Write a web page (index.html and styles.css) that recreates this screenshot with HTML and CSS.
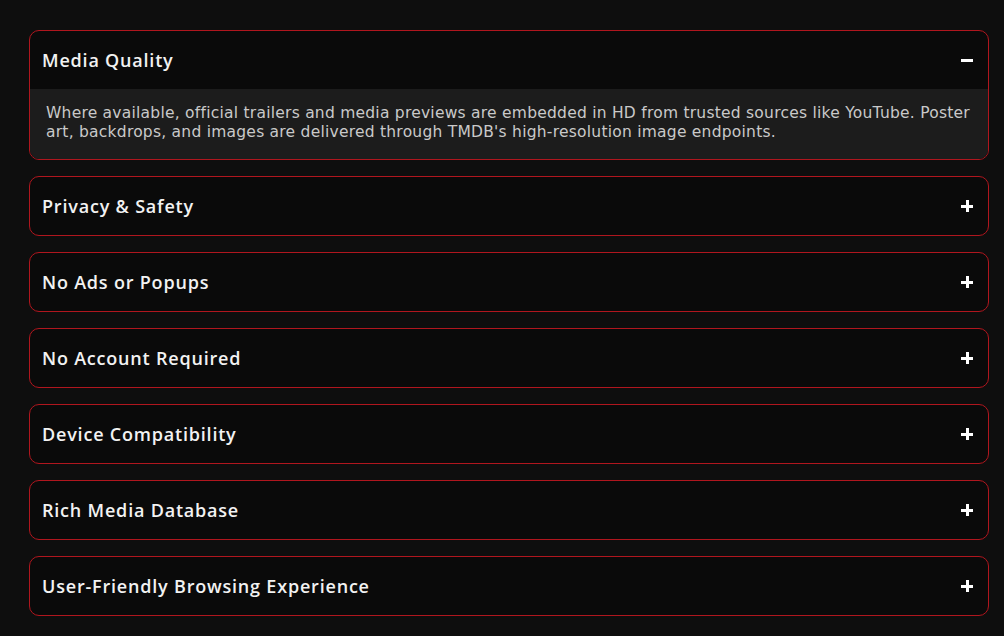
FILE: index.html
```html
<!DOCTYPE html>
<html lang="en">
<head>
<meta charset="utf-8">
<title>FAQ</title>
<link rel="stylesheet" href="styles.css">
</head>
<body>
<main class="faq">
  <section class="item open">
    <div class="head"><span class="title">Media Quality</span><span class="icon minus"></span></div>
    <div class="body">Where available, official trailers and media previews are embedded in HD from trusted sources like YouTube. Poster art, backdrops, and images are delivered through TMDB's high-resolution image endpoints.</div>
  </section>
  <section class="item"><div class="head"><span class="title">Privacy &amp; Safety</span><span class="icon plus"></span></div></section>
  <section class="item"><div class="head"><span class="title">No Ads or Popups</span><span class="icon plus"></span></div></section>
  <section class="item"><div class="head"><span class="title">No Account Required</span><span class="icon plus"></span></div></section>
  <section class="item"><div class="head"><span class="title">Device Compatibility</span><span class="icon plus"></span></div></section>
  <section class="item"><div class="head"><span class="title">Rich Media Database</span><span class="icon plus"></span></div></section>
  <section class="item"><div class="head"><span class="title">User-Friendly Browsing Experience</span><span class="icon plus"></span></div></section>
</main>
</body>
</html>
```
FILE: styles.css
```css
html, body { margin: 0; padding: 0; background: #0e0e0e; }
body { font-family: "DejaVu Sans", sans-serif; color: #f2f2f2; }
.faq { display: flex; flex-direction: column; gap: 16px; width: 960px; margin-left: 29px; padding-top: 30px; }
.item { border: 1px solid #b0161e; border-radius: 10px; background: #0a0a0a; overflow: hidden; }
.head { height: 58px; display: flex; align-items: center; justify-content: space-between; padding: 0 15px 0 12px; }
.title { font-family: "Open Sans", sans-serif; font-size: 18px; font-weight: 600; letter-spacing: 0.8px; }
.icon { position: relative; width: 12px; height: 12px; display: block; }
.icon::before, .icon::after { content: ""; position: absolute; background: #fff; }
.icon::before { left: 0; right: 0; top: 5px; height: 2.5px; }
.plus::after { top: 0; bottom: 0; left: 5px; width: 2.5px; }
.minus::after { display: none; }
.body { background: #1c1c1c; padding: 15px 10px 17px 16px; font-size: 15.5px; letter-spacing: 0.24px; line-height: 19px; color: #c9c9c9; }
```
